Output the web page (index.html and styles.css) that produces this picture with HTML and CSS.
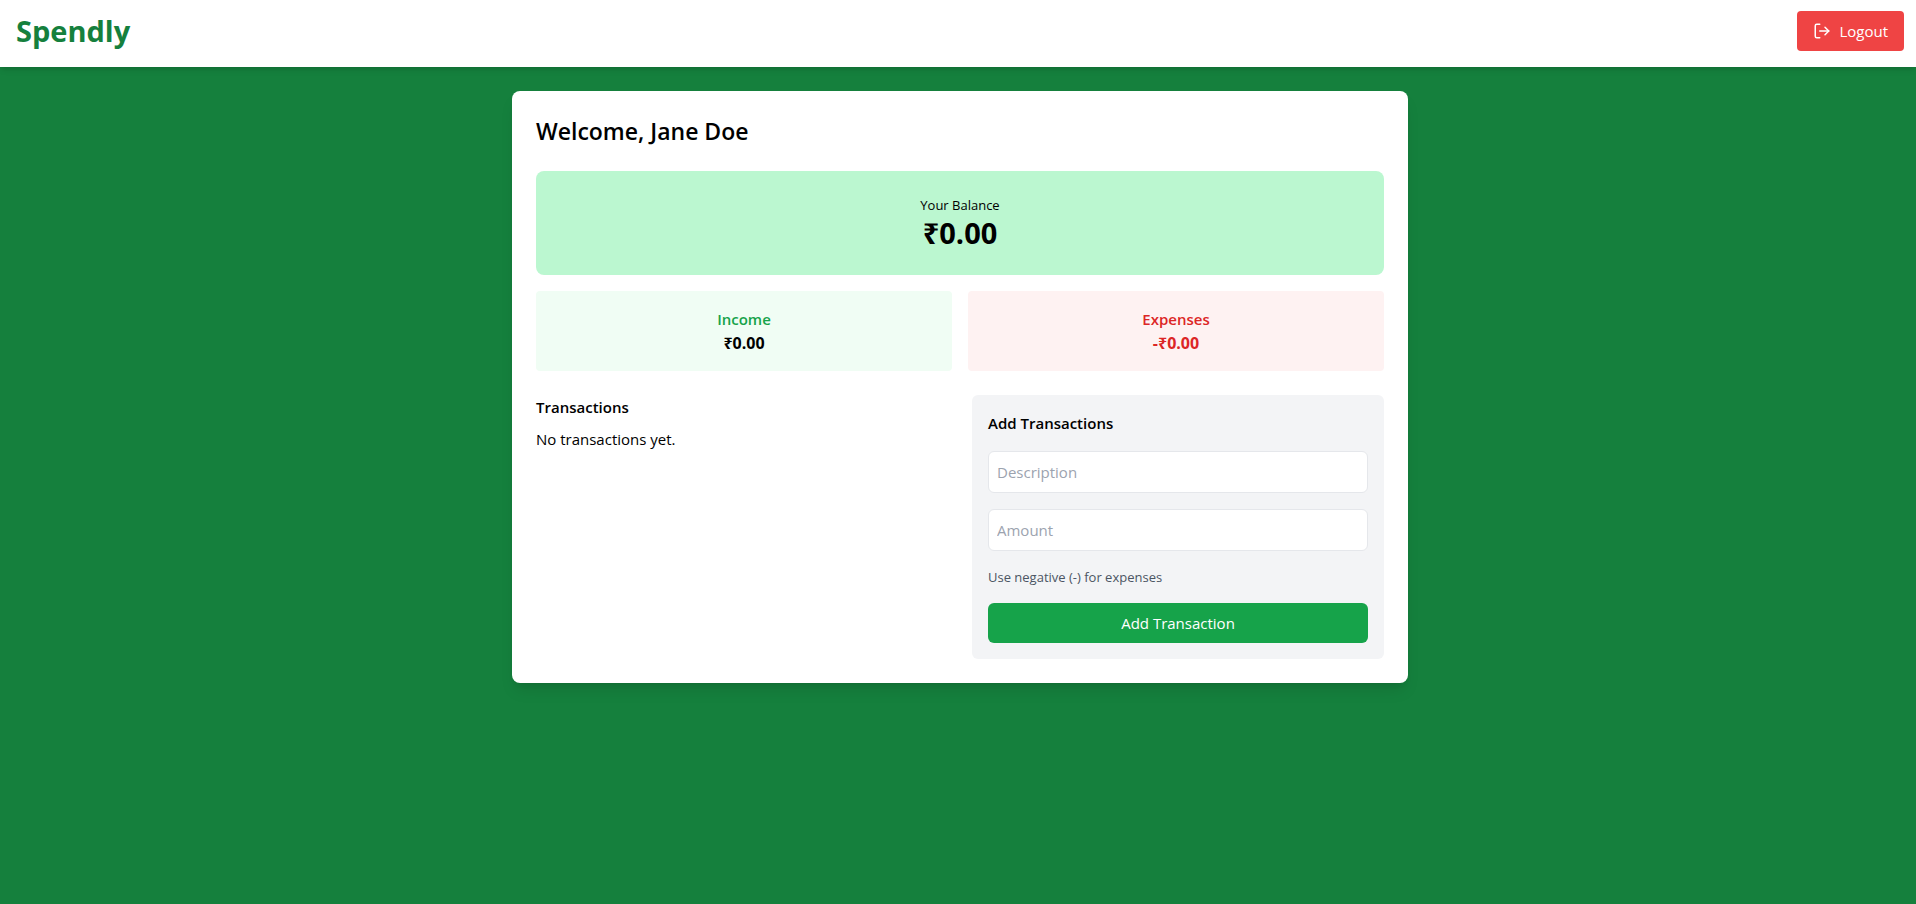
FILE: index.html
```html
<!DOCTYPE html>
<html lang="en">
<head>
  <meta charset="utf-8">
  <meta name="viewport" content="width=device-width, initial-scale=1">
  <title>Spendly</title>
  <link rel="stylesheet" href="styles.css">
</head>
<body>
  <header class="navbar">
    <h1 class="brand">Spendly</h1>
    <button class="logout" type="button">
      <svg class="logout-icon" viewBox="0 0 24 24" aria-hidden="true">
        <path d="M9 21H5a2 2 0 0 1-2-2V5a2 2 0 0 1 2-2h4"/>
        <path d="M16 17l5-5-5-5"/>
        <path d="M21 12H9"/>
      </svg>
      Logout
    </button>
  </header>

  <main class="page">
    <div class="card">
      <h2 class="welcome">Welcome, Jane Doe</h2>

      <section class="balance">
        <p class="balance-label">Your Balance</p>
        <p class="balance-value">₹0.00</p>
      </section>

      <section class="summary">
        <div class="stat stat-income">
          <h3 class="stat-label">Income</h3>
          <p class="stat-value">₹0.00</p>
        </div>
        <div class="stat stat-expenses">
          <h3 class="stat-label">Expenses</h3>
          <p class="stat-value">-₹0.00</p>
        </div>
      </section>

      <div class="columns">
        <section class="history">
          <h3 class="section-title">Transactions</h3>
          <p>No transactions yet.</p>
        </section>

        <form class="entry-form">
          <h3 class="section-title">Add Transactions</h3>
          <input class="field" type="text" placeholder="Description" aria-label="Description">
          <input class="field" type="number" placeholder="Amount" aria-label="Amount" aria-describedby="amount-hint">
          <p class="hint" id="amount-hint">Use negative (-) for expenses</p>
          <button class="submit" type="submit">Add Transaction</button>
        </form>
      </div>
    </div>
  </main>
</body>
</html>
```
FILE: styles.css
```css
*,
*::before,
*::after {
  box-sizing: border-box;
}

body {
  min-height: 100vh;
  margin: 0;
  background: #15803d;
  color: #000;
  font-family: "Segoe UI", "Open Sans", "Noto Sans", sans-serif;
  font-size: 15px;
  line-height: 24px;
}

h1,
h2,
h3,
p {
  margin: 0;
}

button,
input {
  font: inherit;
}

.navbar {
  display: flex;
  align-items: center;
  justify-content: space-between;
  padding: 11px 12px 16px 16px;
  background: #fff;
  box-shadow: 0 4px 6px -1px rgba(0, 0, 0, 0.1), 0 2px 4px -2px rgba(0, 0, 0, 0.1);
}

.brand {
  color: #15803d;
  font-size: 29px;
  font-weight: 700;
  line-height: 36px;
}

.logout {
  display: flex;
  align-items: center;
  gap: 8px;
  padding: 8px 16px;
  border: 0;
  border-radius: 4px;
  background: #ef4444;
  color: #fff;
  cursor: pointer;
}

.logout-icon {
  width: 18px;
  height: 18px;
  fill: none;
  stroke: currentColor;
  stroke-width: 2;
  stroke-linecap: round;
  stroke-linejoin: round;
}

.page {
  padding: 24px 0 24px 4px;
}

.card {
  max-width: 896px;
  margin: 0 auto;
  padding: 24px;
  border-radius: 8px;
  background: #fff;
  box-shadow: 0 10px 15px -3px rgba(0, 0, 0, 0.1), 0 4px 6px -4px rgba(0, 0, 0, 0.1);
}

.welcome {
  margin-bottom: 24px;
  font-size: 23px;
  font-weight: 600;
  line-height: 32px;
}

.balance {
  margin-bottom: 16px;
  padding: 24px;
  border-radius: 8px;
  background: #bbf7d0;
  text-align: center;
}

.balance-label {
  font-size: 13px;
  line-height: 20px;
}

.balance-value {
  font-size: 29px;
  font-weight: 700;
  line-height: 36px;
}

.summary {
  display: grid;
  grid-template-columns: 1fr 1fr;
  gap: 16px;
  margin-bottom: 24px;
}

.stat {
  padding: 16px;
  border-radius: 4px;
  text-align: center;
}

.stat-income {
  background: #f0fdf4;
}

.stat-expenses {
  background: #fef2f2;
  color: #dc2626;
}

.stat-label,
.section-title {
  font-size: 15px;
  font-weight: 600;
}

.stat-income .stat-label {
  color: #16a34a;
}

.stat-value {
  font-size: 16px;
  font-weight: 700;
}

.columns {
  display: grid;
  grid-template-columns: 1fr 1fr;
  gap: 24px;
}

.history {
  display: flex;
  flex-direction: column;
  gap: 8px;
}

.entry-form {
  display: flex;
  flex-direction: column;
  gap: 16px;
  padding: 16px;
  border-radius: 6px;
  background: #f3f4f6;
}

.field {
  width: 100%;
  height: 42px;
  padding: 8px;
  border: 1px solid #e5e7eb;
  border-radius: 6px;
  background: #fff;
  appearance: textfield;
}

.field::placeholder {
  color: #9ca3af;
  opacity: 1;
}

.hint {
  color: #4b5563;
  font-size: 13px;
  line-height: 20px;
}

.submit {
  padding: 8px;
  border: 0;
  border-radius: 6px;
  background: #16a34a;
  color: #fff;
  cursor: pointer;
}
```
